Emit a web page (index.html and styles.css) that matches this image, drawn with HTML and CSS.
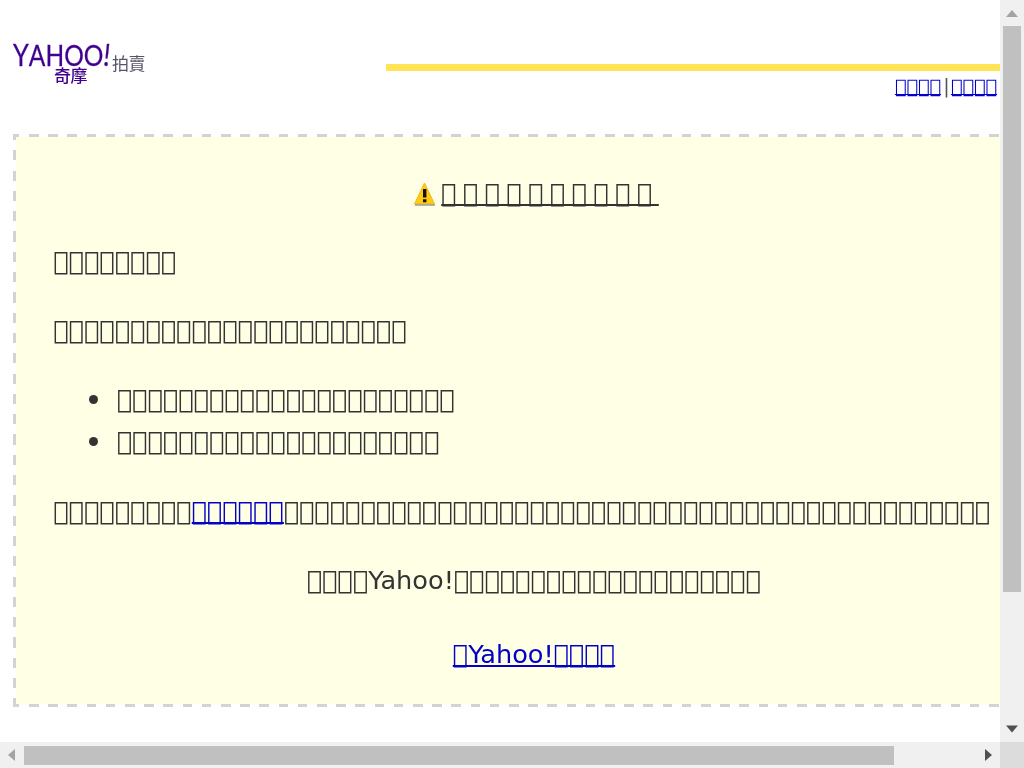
FILE: index.html
```
<!DOCTYPE html>
<html lang="zh-Hant">
<head>
<meta charset="utf-8">
<title>Yahoo!</title>
<link rel="stylesheet" href="styles.css">
</head>
<body>
<div class="window">
  <div class="page">
    <header class="header">
      <svg class="logo" viewBox="0 0 140 48" role="img">
        <text class="logo-name" x="0" y="28" textLength="97" lengthAdjust="spacingAndGlyphs"><tspan font-size="30">Y</tspan>AHOO<tspan font-style="italic" font-size="31">!</tspan></text>
        <text class="logo-sub" x="41" y="44">奇摩</text>
        <text class="logo-unit" x="99" y="32">拍賣</text>
      </svg>
      <div class="side">
        <div class="rule"></div>
        <nav class="links"><a href="#">&#xE9F0;&#xE9F0;&#xE9F0;&#xE9F0;</a><span class="bar">|</span><a href="#">&#xE9F0;&#xE9F0;&#xE9F0;&#xE9F0;</a></nav>
      </div>
    </header>
    <main class="notice">
      <h1 class="title"><svg class="warn" viewBox="0 0 22 24"><path d="M10.5 1 L20.5 22 H.5 Z" fill="#fc1" stroke="#f0b51c" stroke-width="1" stroke-linejoin="round"/><path d="M1 23H21" stroke="#8f8f83" stroke-width="1.3"/><path d="M9 7h3.4v8.5H9zM9 17.3h3.4v3H9z" fill="#111"/></svg><span class="title-text">&#xE9F0;&#xE9F0;&#xE9F0;&#xE9F0;&#xE9F0;&#xE9F0;&#xE9F0;&#xE9F0;&#xE9F0;&#xE9F0;</span></h1>
      <p class="line">&#xE9F0;&#xE9F0;&#xE9F0;&#xE9F0;&#xE9F0;&#xE9F0;&#xE9F0;&#xE9F0;</p>
      <p class="line">&#xE9F0;&#xE9F0;&#xE9F0;&#xE9F0;&#xE9F0;&#xE9F0;&#xE9F0;&#xE9F0;&#xE9F0;&#xE9F0;&#xE9F0;&#xE9F0;&#xE9F0;&#xE9F0;&#xE9F0;&#xE9F0;&#xE9F0;&#xE9F0;&#xE9F0;&#xE9F0;&#xE9F0;&#xE9F0;&#xE9F0;</p>
      <ul class="list">
        <li>&#xE9F0;&#xE9F0;&#xE9F0;&#xE9F0;&#xE9F0;&#xE9F0;&#xE9F0;&#xE9F0;&#xE9F0;&#xE9F0;&#xE9F0;&#xE9F0;&#xE9F0;&#xE9F0;&#xE9F0;&#xE9F0;&#xE9F0;&#xE9F0;&#xE9F0;&#xE9F0;&#xE9F0;&#xE9F0;</li>
        <li>&#xE9F0;&#xE9F0;&#xE9F0;&#xE9F0;&#xE9F0;&#xE9F0;&#xE9F0;&#xE9F0;&#xE9F0;&#xE9F0;&#xE9F0;&#xE9F0;&#xE9F0;&#xE9F0;&#xE9F0;&#xE9F0;&#xE9F0;&#xE9F0;&#xE9F0;&#xE9F0;&#xE9F0;</li>
      </ul>
      <p class="line">&#xE9F0;&#xE9F0;&#xE9F0;&#xE9F0;&#xE9F0;&#xE9F0;&#xE9F0;&#xE9F0;&#xE9F0;<a href="#">&#xE9F0;&#xE9F0;&#xE9F0;&#xE9F0;&#xE9F0;&#xE9F0;</a>&#xE9F0;&#xE9F0;&#xE9F0;&#xE9F0;&#xE9F0;&#xE9F0;&#xE9F0;&#xE9F0;&#xE9F0;&#xE9F0;&#xE9F0;&#xE9F0;&#xE9F0;&#xE9F0;&#xE9F0;&#xE9F0;&#xE9F0;&#xE9F0;&#xE9F0;&#xE9F0;&#xE9F0;&#xE9F0;&#xE9F0;&#xE9F0;&#xE9F0;&#xE9F0;&#xE9F0;&#xE9F0;&#xE9F0;&#xE9F0;&#xE9F0;&#xE9F0;&#xE9F0;&#xE9F0;&#xE9F0;&#xE9F0;&#xE9F0;&#xE9F0;&#xE9F0;&#xE9F0;&#xE9F0;&#xE9F0;&#xE9F0;&#xE9F0;&#xE9F0;&#xE9F0;</p>
      <p class="line center">&#xE9F0;&#xE9F0;&#xE9F0;&#xE9F0;Yahoo!&#xE9F0;&#xE9F0;&#xE9F0;&#xE9F0;&#xE9F0;&#xE9F0;&#xE9F0;&#xE9F0;&#xE9F0;&#xE9F0;&#xE9F0;&#xE9F0;&#xE9F0;&#xE9F0;&#xE9F0;&#xE9F0;&#xE9F0;&#xE9F0;&#xE9F0;&#xE9F0;</p>
      <p class="line center back"><a href="#">&#xE9F0;Yahoo!&#xE9F0;&#xE9F0;&#xE9F0;&#xE9F0;</a></p>
    </main>
  </div>
  <div class="vbar">
    <svg class="arrow-v" viewBox="0 0 24 26"><path d="M6 17h12l-6-7z" fill="#a3a3a3"/></svg>
    <div class="vthumb"></div>
    <svg class="arrow-v" viewBox="0 0 24 26"><path d="M6 9.500h12l-6 7z" fill="#505050"/></svg>
  </div>
  <div class="hbar">
    <svg class="arrow-h" viewBox="0 0 24 26"><path d="M15 7v12l-7-6z" fill="#a3a3a3"/></svg>
    <div class="hthumb"></div>
    <svg class="arrow-h" viewBox="0 0 24 26"><path d="M9 7v12l7-6z" fill="#505050"/></svg>
  </div>
  <div class="corner"></div>
</div>
</body>
</html>
```
FILE: styles.css
```
body { margin: 0; background: #fff; font-family: "DejaVu Sans", sans-serif; color: #333; overflow: hidden; }
a { color: #0000c8; text-decoration-skip-ink: none; }
.window { display: grid; grid-template: 742px 26px / 1000px 24px; width: 1024px; height: 768px; }
.page { overflow: hidden; padding-left: 13px; opacity: .999; will-change: opacity; }
.header { display: flex; height: 134px; width: 987px; justify-content: space-between; }
.logo { width: 140px; height: 48px; margin-top: 38px; overflow: visible; }
.logo-name { font: 29px Lato, sans-serif; fill: #400090; stroke: #400090; stroke-width: .3px; }
.logo-sub { font: 500 17px "Noto Sans CJK TC", sans-serif; fill: #400090; letter-spacing: -.5px; }
.logo-unit { font: 17px "Noto Sans CJK TC", sans-serif; fill: #555568; letter-spacing: -.5px; }
.side { width: 614px; padding-top: 64px; }
.rule { height: 7px; background: #ffe455; }
.links { font-size: 19.2px; line-height: 32px; text-align: right; padding-right: 3px; }
.bar { display: inline-block; width: 10px; text-align: center; text-indent: 1px; color: #555; }
.notice {
  box-sizing: border-box; width: 1043px; height: 573px; padding: 38px 39.5px 0 40.5px; font-size: 25.6px; line-height: 42.24px;
  background:
    repeating-linear-gradient(90deg, #d3d3d3 0 9.6px, #fff 9.6px 19.2px) -3.2px 0 / 1100px 3px no-repeat,
    repeating-linear-gradient(90deg, #d3d3d3 0 9.6px, #fff 9.6px 19.2px) -3.2px 100% / 1100px 3px no-repeat,
    repeating-linear-gradient(#d3d3d3 0 10.15px, #fff 10.15px 20.3px) 0 -4px / 3px 590px no-repeat,
    #ffffe6;
}
.title { display: flex; align-items: center; justify-content: center; margin: 0 0 25.600px; padding-left: 3px; height: 42px; font-size: inherit; font-weight: 400; }
.warn { width: 22px; height: 24px; margin: 2px 5px 0 0; }
.title-text { letter-spacing: 6.4px; text-decoration: underline; text-decoration-skip-ink: none; }
.line { margin: 0 0 27px; white-space: nowrap; }
.list { margin: 0 0 27px; padding-left: 64px; list-style: none; }
.list li::before { content: ""; display: inline-block; width: 9px; height: 9px; margin: 0 19px 4px -28.5px; border-radius: 50%; background: #333; }
.center { text-align: center; }
.line.center { margin-left: -2px; }
.back { margin-top: 32px; }
.vbar { display: flex; flex-direction: column; background: #f0f0f0; }
.vthumb { width: 18px; height: 566px; margin: 0 3px auto; background: #c0c0c0; }
.arrow-v, .arrow-h { width: 24px; height: 26px; flex: none; }
.hbar { display: flex; background: #f0f0f0; }
.hthumb { width: 870px; height: 19px; margin: 4px auto 0 0; background: #c0c0c0; }
.corner { background: #dcdcdc; }
```
